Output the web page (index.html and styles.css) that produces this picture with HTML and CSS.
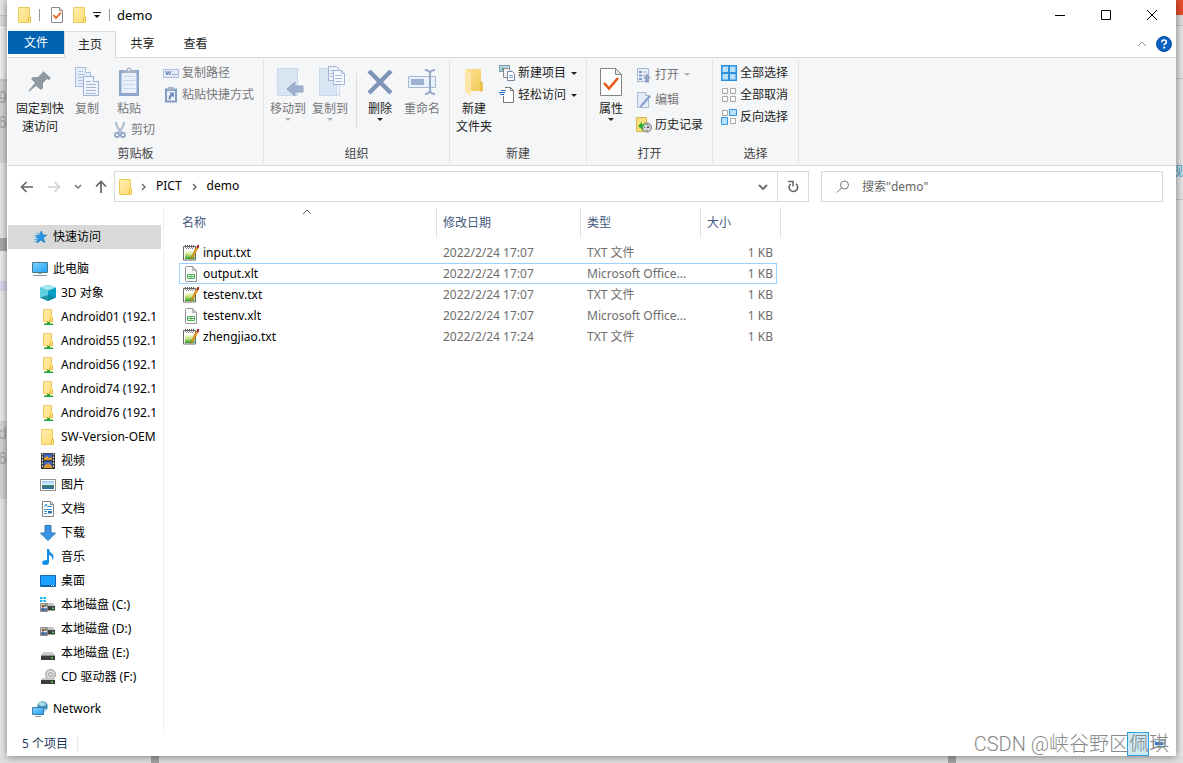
FILE: index.html
```html
<!DOCTYPE html>
<html lang="zh-CN">
<head>
<meta charset="utf-8">
<title>demo</title>
<link rel="stylesheet" href="styles.css">
</head>
<body>
<svg class="sprite" aria-hidden="true">
  <defs>
    <linearGradient id="gFolder" x1="0" y1="0" x2="1" y2="1"><stop offset="0" stop-color="#ffefb0"/><stop offset="1" stop-color="#ffd970"/></linearGradient>
    <linearGradient id="gBig" x1="0" y1="0" x2="1" y2="1"><stop offset="0" stop-color="#fbe29a"/><stop offset="1" stop-color="#f0c850"/></linearGradient>
    <linearGradient id="gScreen" x1="0" y1="0" x2="1" y2="1"><stop offset="0" stop-color="#7fd4ff"/><stop offset="1" stop-color="#22a0f5"/></linearGradient>
    <linearGradient id="gPad" x1="0" y1="0" x2="0" y2="1"><stop offset="0" stop-color="#f4fbd8"/><stop offset=".4" stop-color="#cfe98c"/><stop offset="1" stop-color="#2f9a1f"/></linearGradient>
    <linearGradient id="gPic" x1="0" y1="0" x2="0" y2="1"><stop offset="0" stop-color="#8fc6f2"/><stop offset=".45" stop-color="#dff1fb"/><stop offset=".55" stop-color="#3f7f6a"/><stop offset="1" stop-color="#2b68b0"/></linearGradient>
  </defs>
  <symbol id="folder" viewBox="0 0 16 16"><path d="M1.500.5h11v11h1v4h-12z" fill="url(#gFolder)" stroke="#eccb5c"/><path d="M11.500 15.500v-4l1-1.500h1v5.500" fill="#ffe58e" stroke="#e6c044"/></symbol>
  <symbol id="netfolder" viewBox="0 0 16 16"><path d="M3.500.5h8v9h1v3h-9z" fill="url(#gFolder)" stroke="#eccb5c"/><path d="M10.500 12.500v-3l1-1h1v4z" fill="#ffe58e" stroke="#e6c044"/><path d="M7 13h3v1.500h3V16H4v-1.500h3z" fill="#27a72b"/></symbol>
  <symbol id="checkdoc" viewBox="0 0 12 16"><path d="M.5.5h8l3 3v12H.5z" fill="#fff" stroke="#8b8b8b"/><path d="M8.500.5v3h3" fill="#e4e4e4" stroke="#8b8b8b"/><path d="M2.500 8l2.500 3 5-5.500" fill="none" stroke="#e8591c" stroke-width="1.800"/></symbol>
  <symbol id="pin" viewBox="0 0 32 32"><path d="M19 5l8 7-2 2-2-1-4 4v5l-2 2-5-4-6 5-1.500.5L5 24l6-7-4-4 2-2h5l4-4z" fill="#8e999f"/></symbol>
  <symbol id="copy" viewBox="0 0 32 32"><path d="M4.500 1.500h10l5 5v14h-15z" fill="#e5edf8" stroke="#a8bcd9"/><path d="M14.500 1.500v5h5" fill="#fff" stroke="#a8bcd9"/><path d="M7 5.500h5M7 8.500h7M7 11.500h7M7 14.500h7M7 17.500h7" stroke="#b0c2dd"/><path d="M12.500 10.500h10l5 5v14h-15z" fill="#f1f5fb" stroke="#9cb2d3"/><path d="M22.500 10.500v5h5" fill="#fff" stroke="#9cb2d3"/><path d="M15 15.500h5M15 18.500h10M15 21.500h10M15 24.500h10M15 27.500h10" stroke="#a4b8d6"/></symbol>
  <symbol id="paste" viewBox="0 0 32 32"><path d="M6 4h20v26H6z" fill="#8ea6cb"/><path d="M8.500 7h15v20h-15z" fill="#e9f0fa"/><path d="M10 10.500h12M10 14.500h12M10 18.500h12M10 22.500h12" stroke="#cbd8ea"/><path d="M10 7V4h3.500a2.500 2.500 0 0 1 5 0H22v3z" fill="#a9b4c4"/><circle cx="16" cy="4" r="1" fill="#fff"/></symbol>
  <symbol id="scissors" viewBox="0 0 12 16"><path d="M2 0c0 4 2 7 6 11M10 0c0 4-2 7-6 11" fill="none" stroke="#a9bbd2" stroke-width="2"/><circle cx="3" cy="13" r="2.100" fill="none" stroke="#8aa1c6" stroke-width="1.600"/><circle cx="9" cy="13" r="2.100" fill="none" stroke="#8aa1c6" stroke-width="1.600"/></symbol>
  <symbol id="path" viewBox="0 0 16 16"><path d="M.5 4.500h15v8H.5z" fill="#e2ebf7" stroke="#aebfdb"/><path d="M2.500 6l1.500 4 1.500-4M5 6l1.500 4L8 6" fill="none" stroke="#6583b5"/><path d="M9 9.500h1.500M11.500 9.500h1M13.500 9.500h1" stroke="#6583b5"/></symbol>
  <symbol id="shortcut" viewBox="0 0 16 16"><path d="M2 1.500h12v14H2z" fill="#839cc4"/><path d="M4 4h8v9.500H4z" fill="#eef3fa"/><path d="M5 0h6v3H5z" fill="#a8b6ca"/><path d="M6 5.500h5v5l-1.500-1.500q-2 1-2 3.500h-2q0-4 2.300-5.200z" fill="#6f8dbd"/></symbol>
  <symbol id="moveto" viewBox="0 0 32 32"><path d="M5.500 2.500h20v27h-20z" fill="#dae5f4" stroke="#cad8ec"/><path d="M21 16v12l3 2V18z" fill="#edf3fa"/><path d="M15 23l8-7v4h8v6h-8v4z" fill="#a0b1cf" stroke="#8fa4c6"/></symbol>
  <symbol id="copyto" viewBox="0 0 32 32"><path d="M5.500 2.500h20v27h-20z" fill="#dae5f4" stroke="#cad8ec"/><path d="M22.500 29v-9l3-3v12" fill="#edf3fa" stroke="#cad8ec"/><path d="M14.500.5h8l3 3v11h-11z" fill="#eef3fa" stroke="#9fb4d4"/><path d="M19.500 4.500h8l3 3v11h-11z" fill="#f6f9fd" stroke="#9fb4d4"/><path d="M27.500 4.500v3h3M21 9.500h7M21 12.500h7M21 15.500h7M16 4.500h3M16 7.500h3M16 10.500h3" fill="none" stroke="#a5b8d6"/></symbol>
  <symbol id="delete" viewBox="0 0 32 32"><path d="M5 5l22 22M27 5L5 27" stroke="#7f94b8" stroke-width="4.500"/></symbol>
  <symbol id="rename" viewBox="0 0 32 32"><path d="M2.500 10.500h27v11h-27z" fill="#eaf1fa" stroke="#a4b8d7"/><path d="M5 13h13v6H5z" fill="#9cb0d0"/><path d="M19 4q4 0 5 3 1-3 5-3M19 28q4 0 5-3 1 3 5 3M24 6v20" fill="none" stroke="#95a9c8" stroke-width="2"/></symbol>
  <symbol id="bigfolder" viewBox="0 0 32 32"><path d="M7 3h16v12l2 2v8H12V9L7 3z" fill="url(#gBig)"/><path d="M7 3l6 4v23l-6-4z" fill="#fbe6a8"/><path d="M22 15l2.500 2v8.500H22z" fill="#e9bf4d"/></symbol>
  <symbol id="newitem" viewBox="0 0 16 16"><path d="M.5.5h10v6H.5z" fill="#b9ddec" stroke="#7a9aa8"/><path d="M2 5l2-3 3 4" fill="#459a8c"/><path d="M4.500 3.500h5l2 2v7h-7z" fill="#f4f4f4" stroke="#8a8a8a"/><path d="M8.500 6.500h5l2 2v7h-7z" fill="#fff" stroke="#788aa0"/><path d="M10 10.500h4M10 12.500h4" stroke="#7aa5d5"/></symbol>
  <symbol id="easy" viewBox="0 0 16 16"><path d="M4.500.5h7l3 3v12h-10z" fill="#fff"/><path d="M6 .5h5.500l3 3v12h-10V9" fill="none" stroke="#777"/><path d="M11.500.5v3h3" fill="none" stroke="#777"/><path d="M2 3.500h5M0 5.500h6M1 7.500h4" stroke="#2871b8"/></symbol>
  <symbol id="props" viewBox="0 0 32 32"><path d="M5.500 2.500h15l6 6v21h-21z" fill="#fff" stroke="#858585"/><path d="M20.500 2.500v6h6z" fill="#e6e6e6" stroke="#858585"/><path d="M9 17l5 5.500L23 12" fill="none" stroke="#ea5b19" stroke-width="2.600"/></symbol>
  <symbol id="open" viewBox="0 0 16 16"><path d="M1.500 1.500h11v13h-11z" fill="#eaf0f8" stroke="#a5b8d4"/><path d="M3 4h3v2H3zM3 7.500h3v2H3zM3 11h3v2H3z" fill="#7f98c1"/><path d="M7 5h4M7 8.500h2" stroke="#a5b8d4"/><path d="M9 15.500v-4H7l4-5 4 5h-2v4z" fill="#8fa3c5"/></symbol>
  <symbol id="edit" viewBox="0 0 16 16"><path d="M1.500.5h8l3 3v12h-11z" fill="#e3ecf8" stroke="#a5b8d4"/><path d="M9.500.5v3h3" fill="#fff" stroke="#a5b8d4"/><path d="M13.500 3.500l-8 9-1.500 2.500 2.500-1.500 8-9z" fill="#8fa9cf" stroke="#8199c0"/></symbol>
  <symbol id="history" viewBox="0 0 16 16"><path d="M.5.5h10v14H.5z" fill="#f9df7c" stroke="#d9b54c"/><circle cx="11" cy="10.500" r="4.500" fill="#d8d8d8" stroke="#777"/><path d="M11 10.500l2-2M11 10.500h2.500M11 7v1M11 13v1M8 10.500h1" fill="none" stroke="#555"/><path d="M2 9l4-4v2.500q3-.5 4-2.500-1 3-3 4.500-1 2 0 4.500-2-.5-1.500-2z" fill="#2fae35"/></symbol>
  <symbol id="selall" viewBox="0 0 16 16"><path d="M0 0h16v16H0z" fill="#2b8fe0"/><path d="M1.500 1.500H7V7H1.500zM9 1.500h5.500V7H9zM1.500 9H7v5.500H1.500zM9 9h5.500v5.500H9z" fill="#b8e0fb"/></symbol>
  <symbol id="selnone" viewBox="0 0 16 16"><path d="M1.500 1.500h5v5h-5zM9.500 1.500h5v5h-5zM1.500 9.500h5v5h-5zM9.500 9.500h5v5h-5z" fill="#fff" stroke="#a6a6a6"/></symbol>
  <symbol id="selinv" viewBox="0 0 16 16"><path d="M1.500 1.500h5v5h-5zM9.500 9.500h5v5h-5z" fill="#fff" stroke="#a6a6a6"/><path d="M8.500.5h7v6h-7zM.5 8.500h6v7h-6z" fill="#b8e0fb" stroke="#3596e2"/></symbol>
  <symbol id="star" viewBox="0 0 16 16"><path d="M9.500 2l1 4 4 .2-3.300 2.500 1.600 4.800-4-2.400L5 14l1-4.500-2-2.700 3.500-.6z" fill="#2697ea" stroke="#1777c2" stroke-width=".8"/><path d="M4 4.500h3.500M2 6.500h3M3 8.500h2.500M2 10.500h3M2 12.500h3" stroke="#5fb4f0"/></symbol>
  <symbol id="pc" viewBox="0 0 16 16"><path d="M.5 1.500h15v10H.5z" fill="url(#gScreen)" stroke="#49758f"/><path d="M6 12h4v1H6z" fill="#aaa"/><path d="M1 14.500h14" stroke="#7d95a5"/></symbol>
  <symbol id="cube" viewBox="0 0 16 16"><path d="M8 0l8 2.500v10L8 16 0 12.500v-10z" fill="#0d9fc6"/><path d="M8 0l8 2.500L8 5.500 0 2.500z" fill="#a5e8ee"/><path d="M0 2.500l8 3V16l-8-3.500z" fill="#62d0e0"/><path d="M0 12.500L8 10l8 2.500L8 16z" fill="#087f93" opacity=".75"/></symbol>
  <symbol id="video" viewBox="0 0 16 16"><path d="M1 0h14v16H1z" fill="#3b3b3b"/><path d="M4 1h8v6H4zM4 8.500h8V15H4z" fill="#3d64c9"/><path d="M4 5l3-2 2 2 3-1v3H4zM4 13l4-3 4 3v2H4z" fill="#d79b2e"/><path d="M2.500.5v15M13.500.5v15" stroke="#eee" stroke-dasharray="1.500 1.500"/></symbol>
  <symbol id="picture" viewBox="0 0 16 16"><path d="M.5 2.500h15v11H.5z" fill="#fff" stroke="#8d8d8d"/><path d="M2 4h12v8H2z" fill="url(#gPic)"/></symbol>
  <symbol id="doc" viewBox="0 0 16 16"><path d="M2.500.5h8l3 3v12h-11z" fill="#fff" stroke="#838383"/><path d="M10.500.5v3h3" fill="none" stroke="#838383"/><path d="M4.500 6l1.500-3 1.500 3M8 5.500h4M4 8.500h8M4 10.500h3M4 12.500h3" fill="none" stroke="#3d92cf"/><path d="M8 10h4v2.500H8z" fill="#2d75a8"/></symbol>
  <symbol id="down" viewBox="0 0 16 16"><path d="M5 .5h6V8h4.500L8 15.500.5 8H5z" fill="#3a93e2" stroke="#2a76c0"/></symbol>
  <symbol id="music" viewBox="0 0 16 16"><path d="M7 0h2q.5 3 3 4.500 3 3 .5 7Q13 7 9 6v7q0 3-3.500 3Q2 16 2 13.500 2.300 11 7 11z" fill="#0f8de8"/></symbol>
  <symbol id="desktop" viewBox="0 0 16 16"><path d="M.5 2.500h15v11H.5z" fill="#1a9fff" stroke="#1269a9"/><path d="M1 12.500h14" stroke="#0d5f9d"/><path d="M11 12.500h1M13 12.500h1" stroke="#fff"/></symbol>
  <symbol id="disk" viewBox="0 0 16 16"><path d="M3 7h10l2 3.500H1z" fill="#cdcdcd"/><path d="M1 10.500h14V15H1z" fill="#3c3c3c"/><path d="M11 12h2v1.500h-2z" fill="#39d84a"/></symbol>
  <symbol id="shared" viewBox="0 0 16 16"><path d="M7 6h6l2 3H7z" fill="#c2c2c2"/><path d="M7 9h8v4.500H7z" fill="#414141"/><path d="M12 10.500h2V12h-2z" fill="#39d84a"/><path d="M.5 6.500h7v8h-7z" fill="#ddd" stroke="#8c8c8c"/><circle cx="3" cy="9" r="1.300" fill="#8a4c26"/><circle cx="5.500" cy="8.500" r="1.200" fill="#5c6b3a"/><path d="M1 14q0-3.500 2-3.500 2 0 2 2 0-2 2-1.500V14z" fill="#496c9c"/></symbol>
  <symbol id="sysdisk" viewBox="0 0 16 16"><use href="#shared"/><path d="M0 0h2.500v2H0zM3.500 0H6v2H3.500zM0 3h2.500v2H0zM3.500 3H6v2H3.500z" fill="#13b6f2"/></symbol>
  <symbol id="cd" viewBox="0 0 16 16"><circle cx="10.500" cy="5.500" r="5" fill="#d8d8d8" stroke="#999"/><circle cx="10.500" cy="5.500" r="1.700" fill="#fff" stroke="#888"/><path d="M2 9h11l2 2H1z" fill="#c7c7c7"/><path d="M1 11h14v4H1z" fill="#3c3c3c"/><path d="M11 12.500h2V14h-2z" fill="#39d84a"/></symbol>
  <symbol id="network" viewBox="0 0 16 16"><circle cx="10.500" cy="5.500" r="5.300" fill="#4793bd"/><path d="M6 3q4-4 8 0-2 3-5 2zM11 8h4l-2 2.500z" fill="#a9dbe3"/><path d="M.5 6.500h11v7H.5z" fill="url(#gScreen)" stroke="#3b7fa9"/><path d="M3 15.500h6" stroke="#8c9ea8"/></symbol>
  <symbol id="txt" viewBox="0 0 16 16"><path d="M.5 1.500h12v13.500H.5z" fill="#fff" stroke="#666"/><path d="M2 6h9.500v8H2z" fill="url(#gPad)"/><path d="M2 .500h9" stroke="#555" stroke-dasharray="1 1"/><path d="M2 2.500h9M3 3.500h7" stroke="#888" stroke-dasharray="1 1"/><path d="M13 2.500L8.500 12 7.500 14.500 10 12.500 15 3z" fill="#f5a623" stroke="#a86b0f" stroke-width=".6"/><path d="M13.500 2l1-2H16v2l-1 1.500z" fill="#a3151b"/></symbol>
  <symbol id="xlt" viewBox="0 0 16 16"><path d="M3.500.5h6l4 4v11h-10q-1 0-1-1v-13q0-1 1-1z" fill="#fafafa" stroke="#929292"/><path d="M9.500.5v4h4z" fill="#ccc" stroke="#929292" stroke-width=".6"/><path d="M4.500 8.500h7v4h-7zM4.500 10.500h7M8 8.500v4" fill="#fff" stroke="#4fb153"/></symbol>
</svg>

<div class="screen">
  <div class="edge edge-left" aria-hidden="true">
    <span class="edge-toolbar"></span>
    <span class="edge-code edge-code-first"><i>9</i><i>6</i></span>
    <span class="edge-plain"></span>
    <span class="edge-dark"></span>
    <span class="edge-pale"></span>
    <span class="edge-mark"></span>
    <span class="edge-page"></span>
    <span class="edge-code edge-code-second"><i>d</i><i>6</i></span>
  </div>

  <main class="window">
    <header class="titlebar">
      <svg class="i16"><use href="#folder"/></svg>
      <span class="tick"></span>
      <button class="quick" aria-label="属性"><svg class="doc-icon"><use href="#checkdoc"/></svg></button>
      <button class="quick" aria-label="新建文件夹"><svg class="i16"><use href="#folder"/></svg></button>
      <button class="quick-more" aria-label="自定义快速访问工具栏"><svg width="8" height="8" viewBox="0 0 8 8"><path d="M0 1.500h8" stroke="#111"/><path d="M1 4h6L4 7z" fill="#111"/></svg></button>
      <span class="tick"></span>
      <h1 class="title">demo</h1>
      <div class="controls">
        <button aria-label="最小化"><svg width="10" height="10"><path d="M0 5.500h10" stroke="#000"/></svg></button>
        <button aria-label="最大化"><svg width="10" height="10"><path d="M.5.5h9v9h-9z" fill="none" stroke="#000"/></svg></button>
        <button aria-label="关闭"><svg width="10" height="10"><path d="M0 0l10 10M10 0L0 10" stroke="#000"/></svg></button>
      </div>
    </header>

    <nav class="tabs">
      <button class="tab tab-file">文件</button>
      <button class="tab tab-active">主页</button>
      <button class="tab">共享</button>
      <button class="tab">查看</button>
      <div class="tab-tools">
        <button aria-label="最小化功能区"><svg width="10" height="6"><path d="M1 5l4-4 4 4" fill="none" stroke="#999"/></svg></button>
        <button aria-label="帮助"><svg width="16" height="16"><circle cx="8" cy="8" r="7.500" fill="#0a63c2" stroke="#084b94"/><path d="M5.800 6.200q0-2.200 2.300-2.200 2.200 0 2.200 1.900 0 1.100-1.200 1.800-.9.600-.9 1.600" fill="none" stroke="#fff" stroke-width="1.600"/><circle cx="8.200" cy="11.600" r="1.100" fill="#fff"/></svg></button>
      </div>
    </nav>

    <section class="ribbon">
      <div class="group">
        <div class="tools tools-clip">
          <button class="big big-wide"><svg class="i32"><use href="#pin"/></svg><span>固定到快<br>速访问</span></button>
          <button class="big off"><svg class="i32"><use href="#copy"/></svg><span>复制</span></button>
          <div class="stack">
            <button class="big off"><svg class="i32"><use href="#paste"/></svg><span>粘贴</span></button>
            <button class="small off"><svg class="scissors"><use href="#scissors"/></svg>剪切</button>
          </div>
          <div class="list">
            <button class="small off"><svg class="i16"><use href="#path"/></svg>复制路径</button>
            <button class="small off"><svg class="i16"><use href="#shortcut"/></svg>粘贴快捷方式</button>
          </div>
        </div>
        <div class="caption">剪贴板</div>
      </div>
      <div class="group">
        <div class="tools tools-organize">
          <button class="big off"><svg class="i32"><use href="#moveto"/></svg><span>移动到</span><b class="caret"></b></button>
          <button class="big off"><svg class="i32"><use href="#copyto"/></svg><span>复制到</span><b class="caret"></b></button>
          <span class="rule"></span>
          <button class="big"><svg class="i32"><use href="#delete"/></svg><span>删除</span><b class="caret"></b></button>
          <button class="big off"><svg class="i32"><use href="#rename"/></svg><span>重命名</span></button>
        </div>
        <div class="caption">组织</div>
      </div>
      <div class="group">
        <div class="tools tools-new">
          <button class="big"><svg class="i32"><use href="#bigfolder"/></svg><span>新建<br>文件夹</span></button>
          <div class="list">
            <button class="small"><svg class="i16"><use href="#newitem"/></svg>新建项目<b class="caret"></b></button>
            <button class="small"><svg class="i16"><use href="#easy"/></svg>轻松访问<b class="caret"></b></button>
          </div>
        </div>
        <div class="caption">新建</div>
      </div>
      <div class="group">
        <div class="tools tools-open">
          <button class="big"><svg class="i32"><use href="#props"/></svg><span>属性</span><b class="caret"></b></button>
          <div class="list list-loose">
            <button class="small off"><svg class="i16"><use href="#open"/></svg>打开<b class="caret"></b></button>
            <button class="small off"><svg class="i16"><use href="#edit"/></svg>编辑</button>
            <button class="small"><svg class="i16"><use href="#history"/></svg>历史记录</button>
          </div>
        </div>
        <div class="caption">打开</div>
      </div>
      <div class="group">
        <div class="tools tools-select">
          <div class="list">
            <button class="small"><svg class="i16"><use href="#selall"/></svg>全部选择</button>
            <button class="small"><svg class="i16"><use href="#selnone"/></svg>全部取消</button>
            <button class="small"><svg class="i16"><use href="#selinv"/></svg>反向选择</button>
          </div>
        </div>
        <div class="caption">选择</div>
      </div>
    </section>

    <section class="location">
      <div class="history">
        <button aria-label="后退"><svg width="14" height="12"><path d="M13 6H2M6.500 1L1.500 6l5 5" fill="none" stroke="#666" stroke-width="1.700"/></svg></button>
        <button aria-label="前进"><svg width="14" height="12"><path d="M1 6h11M7.500 1l5 5-5 5" fill="none" stroke="#d2d2d2" stroke-width="1.700"/></svg></button>
        <button aria-label="最近浏览的位置"><svg width="8" height="6"><path d="M1 1l3 3 3-3" fill="none" stroke="#777" stroke-width="1.500"/></svg></button>
        <button aria-label="上移"><svg width="12" height="14"><path d="M6 13V2M1 6.500l5-5 5 5" fill="none" stroke="#666" stroke-width="1.700"/></svg></button>
      </div>
      <div class="address">
        <svg class="i16"><use href="#folder"/></svg>
        <svg class="crumb-arrow" width="6" height="8"><path d="M1 1l3 3-3 3" fill="none" stroke="#666" stroke-width="1.400"/></svg>
        <a class="crumb" href="#">PICT</a>
        <svg class="crumb-arrow" width="6" height="8"><path d="M1 1l3 3-3 3" fill="none" stroke="#666" stroke-width="1.400"/></svg>
        <a class="crumb" href="#">demo</a>
        <button class="drop" aria-label="以前的位置"><svg width="10" height="8"><path d="M1 2l4 4 4-4" fill="none" stroke="#666" stroke-width="1.800"/></svg></button>
        <button class="refresh" aria-label="刷新"><svg width="12" height="14"><path d="M9 3.800A4.300 4.300 0 1 1 3.500 4" fill="none" stroke="#666" stroke-width="1.600"/><path d="M1 1.500h5v5" fill="none" stroke="#666" stroke-width="1.500"/></svg></button>
      </div>
      <label class="search">
        <svg width="14" height="14"><circle cx="8.500" cy="5" r="4" fill="none" stroke="#777"/><path d="M5.500 8L1 12.500" stroke="#777"/></svg>
        <input type="text" aria-label="搜索" placeholder='搜索"demo"'>
      </label>
    </section>

    <div class="content">
      <nav class="tree">
        <a href="#" class="node root current"><svg class="i16"><use href="#star"/></svg>快速访问</a>
        <div class="branch">
          <a href="#" class="node root"><svg class="i16"><use href="#pc"/></svg>此电脑</a>
          <a href="#" class="node"><svg class="i16"><use href="#cube"/></svg>3D 对象</a>
          <a href="#" class="node"><svg class="i16"><use href="#netfolder"/></svg>Android01 (192.1</a>
          <a href="#" class="node"><svg class="i16"><use href="#netfolder"/></svg>Android55 (192.1</a>
          <a href="#" class="node"><svg class="i16"><use href="#netfolder"/></svg>Android56 (192.1</a>
          <a href="#" class="node"><svg class="i16"><use href="#netfolder"/></svg>Android74 (192.1</a>
          <a href="#" class="node"><svg class="i16"><use href="#netfolder"/></svg>Android76 (192.1</a>
          <a href="#" class="node"><svg class="i16"><use href="#folder"/></svg>SW-Version-OEM</a>
          <a href="#" class="node"><svg class="i16"><use href="#video"/></svg>视频</a>
          <a href="#" class="node"><svg class="i16"><use href="#picture"/></svg>图片</a>
          <a href="#" class="node"><svg class="i16"><use href="#doc"/></svg>文档</a>
          <a href="#" class="node"><svg class="i16"><use href="#down"/></svg>下载</a>
          <a href="#" class="node"><svg class="i16"><use href="#music"/></svg>音乐</a>
          <a href="#" class="node"><svg class="i16"><use href="#desktop"/></svg>桌面</a>
          <a href="#" class="node"><svg class="i16"><use href="#sysdisk"/></svg>本地磁盘 (C:)</a>
          <a href="#" class="node"><svg class="i16"><use href="#shared"/></svg>本地磁盘 (D:)</a>
          <a href="#" class="node"><svg class="i16"><use href="#disk"/></svg>本地磁盘 (E:)</a>
          <a href="#" class="node"><svg class="i16"><use href="#cd"/></svg>CD 驱动器 (F:)</a>
        </div>
        <a href="#" class="node root"><svg class="i16"><use href="#network"/></svg>Network</a>
      </nav>

      <div class="files">
        <table>
          <colgroup><col class="c-name"><col class="c-date"><col class="c-type"><col class="c-size"><col class="c-end"></colgroup>
          <thead>
            <tr><th>名称<svg class="sort" width="10" height="6"><path d="M1 5l4-4 4 4" fill="none" stroke="#666"/></svg></th><th>修改日期</th><th>类型</th><th>大小</th><th></th></tr>
          </thead>
          <tbody>
            <tr><td><span class="file"><svg class="i16"><use href="#txt"/></svg>input.txt</span></td><td>2022/2/24 17:07</td><td>TXT 文件</td><td>1 KB</td></tr>
            <tr class="focused"><td><span class="file"><svg class="i16"><use href="#xlt"/></svg>output.xlt</span></td><td>2022/2/24 17:07</td><td>Microsoft Office...</td><td>1 KB</td></tr>
            <tr><td><span class="file"><svg class="i16"><use href="#txt"/></svg>testenv.txt</span></td><td>2022/2/24 17:07</td><td>TXT 文件</td><td>1 KB</td></tr>
            <tr><td><span class="file"><svg class="i16"><use href="#xlt"/></svg>testenv.xlt</span></td><td>2022/2/24 17:07</td><td>Microsoft Office...</td><td>1 KB</td></tr>
            <tr><td><span class="file"><svg class="i16"><use href="#txt"/></svg>zhengjiao.txt</span></td><td>2022/2/24 17:24</td><td>TXT 文件</td><td>1 KB</td></tr>
          </tbody>
        </table>
      </div>
    </div>

    <footer class="status">
      <span class="count">5 个项目</span>
      <button class="view view-on" aria-label="详细信息"></button>
      <button class="view" aria-label="大图标"><svg width="16" height="10"><path d="M2.500.5h11v8h-11z" fill="#d9e8f8" stroke="#8aa"/><path d="M4 3h8v3H4z" fill="#3c74c8"/></svg></button>
      <span class="watermark">CSDN @峡谷野区佩琪</span>
    </footer>
  </main>

  <div class="edge edge-right" aria-hidden="true">
    <span class="edge-red"></span>
    <span class="edge-row edge-row-a"></span>
    <span class="edge-row edge-row-b"></span>
    <span class="edge-row edge-row-c"><i>规</i></span>
  </div>
  <div class="edge-bottom" aria-hidden="true"><span></span><span></span></div>
</div>
</body>
</html>
```
FILE: styles.css
```css
* { box-sizing: border-box; }

body {
  margin: 0;
  font: 12px/18px "Noto Sans", "Noto Sans CJK SC", sans-serif;
  color: #000;
}

button {
  margin: 0;
  padding: 0;
  border: 0;
  background: none;
  color: inherit;
  font: inherit;
}

a { color: inherit; text-decoration: none; }
svg { display: block; flex: none; }
.sprite { position: absolute; width: 0; height: 0; }
.i16 { width: 16px; height: 16px; }
.i32 { width: 32px; height: 32px; }

/* Desktop behind the window */
.screen {
  display: grid;
  grid-template: minmax(0, 1fr) 7px / 7px minmax(0, 1fr) 7px;
  min-height: 100vh;
  background: #e4e4e4;
}
.edge { display: flex; flex-direction: column; overflow: hidden; background: #e9e9e9; }
.edge span { flex: none; }
.edge i { display: block; font: 16px/25px "Liberation Sans", sans-serif; color: #aaa; }
.edge-toolbar { height: 81px; background: linear-gradient(#e8e8e8 15px, #c8c8c8 15px, #c8c8c8 16px, #dedede 16px, #dedede 25px, #ccc 25px, #ccc 26px, #f0f0f0 26px); border-bottom: 2px solid #c8c8c8; }
.edge-code { display: flex; flex-direction: column; align-items: flex-end; background: #d5d5d5; }
.edge-code-first { height: 82px; padding-top: 4px; }
.edge-plain { height: 75px; background: #e8e8e8; }
.edge-dark { height: 13px; background: #a9a9a9; }
.edge-pale { height: 30px; background: #efefef; }
.edge-mark { height: 10px; background: #d9d9ee; }
.edge-page { height: 130px; background: #ececec; }
.edge-code-second { height: 78px; }
.edge-red { height: 15px; background: #ea4f2d; }
.edge-row { border-bottom: 1px solid #c8c8c8; background: #e6e6e6; }
.edge-row-a { height: 11px; background: #dedede; }
.edge-row-b { height: 53px; }
.edge-row-c { display: flex; justify-content: flex-end; height: 121px; padding-top: 79px; }
.edge-row-c i { font: 12px/25px "Noto Sans CJK SC", sans-serif; color: #3b9bcb; }
.edge-bottom { grid-column: 1 / 4; display: grid; grid-template-columns: 7fr 35fr 10fr; background: #dedede; }
.edge-bottom span { border-right: 8px solid #a2a2a2; }

.window {
  position: relative;
  display: flex;
  flex-direction: column;
  padding-left: 1px;
  background: #fff;
  box-shadow: 0 0 8px rgba(0, 0, 0, .5);
}

/* Title bar */
.titlebar { display: flex; align-items: center; height: 31px; padding: 0 1px 1px 9px; }
.tick { width: 1px; height: 12px; margin: 0 11px 0 6px; background: #999; }
.quick { width: 16px; margin-right: 5px; }
.quick .doc-icon { width: 12px; height: 16px; }
.quick-more + .tick { margin-left: 8px; margin-right: 7px; }
.title { margin: 0; font-size: 13px; font-weight: 400; }
.controls { display: flex; align-self: stretch; margin-left: auto; }
.controls button { display: grid; place-items: center; width: 46px; }

/* Tabs */
.tabs { display: flex; height: 27px; border-bottom: 1px solid #dadbdc; }
.tab { width: 53px; color: #222; }
.tab-file { width: 56px; height: 23px; background: #0063b1; color: #fff; }
.tab-active { width: 52px; height: 27px; border: 1px solid #dadbdc; border-bottom: 0; background: #f5f6f7; }
.tab-tools { display: flex; align-items: center; gap: 9px; margin-left: auto; padding-right: 4px; }

/* Ribbon */
.ribbon { display: flex; height: 108px; border-bottom: 1px solid #dadbdc; background: #f5f6f7; }
.group { display: flex; flex-direction: column; margin: 2px 0; border-right: 1px solid #e2e3e4; color: #222; }
.tools { display: flex; flex: 1; padding: 2px 3px 0; }
.tools-clip { padding: 2px 9px 0 8px; }
.tools-organize { padding-right: 6px; }
.tools-new { padding-right: 9px; }
.tools-open { padding-right: 9px; }
.tools-select { padding: 2px 10px 0 4px; }
.caption { height: 18px; line-height: 18px; text-align: center; color: #444; }
.big { display: flex; flex-direction: column; align-items: center; width: 42px; padding-top: 4px; align-self: flex-start; white-space: nowrap; }
.big span { padding-top: 2px; }
.big-wide { width: 48px; margin-right: 2px; }
.stack { display: flex; flex-direction: column; }
.stack .small { height: 20px; gap: 5px; margin: 2px 0 0 6px; }
.scissors { width: 12px; height: 16px; }
.list { display: flex; flex-direction: column; margin-left: 4px; }
.tools-clip .list { margin-left: 8px; }
.small { display: flex; align-items: center; gap: 3px; height: 22px; white-space: nowrap; }
.list-loose .small { height: 25px; }
.off { color: #777; }
.caret { width: 0; border: 3px solid transparent; border-top-color: #222; border-bottom: 0; }
.off .caret { border-top-color: #b0b0b0; }
.small .caret { margin-left: 2px; }
.rule { width: 1px; height: 55px; margin: 11px 2px 0 5px; background: #dcdddf; }

/* Location bar */
.location { display: flex; padding: 5px 13px 6px 0; height: 42px; }
.history { display: flex; align-items: center; width: 106px; padding: 0 7px 0 12px; justify-content: space-between; }
.address { display: flex; flex: 1; align-items: center; margin-right: 12px; padding-left: 3px; border: 1px solid #d9d9d9; }
.crumb-arrow { margin: 0 9px 0 7px; }
.crumb { padding-bottom: 2px; margin-right: 3px; }
.drop { display: grid; place-items: center; width: 28px; height: 100%; margin-left: auto; }
.refresh { display: grid; place-items: center; width: 31px; height: 100%; border-left: 1px solid #d9d9d9; }
.search { display: flex; align-items: center; width: 30%; max-width: 342px; gap: 12px; padding: 0 14px; border: 1px solid #d9d9d9; }
.search input { flex: 1; min-width: 0; padding: 0; border: 0; outline: 0; background: none; font: inherit; }
.search input::placeholder { color: #666; opacity: 1; }

/* Folder tree and file list */
.content { display: flex; flex: 1; min-height: 0; }
.tree { width: 156px; padding: 17px 2px 0 0; border-right: 1px solid #f0f0f0; }
.node { display: flex; align-items: center; height: 24px; gap: 5px; padding-left: 32px; overflow: hidden; white-space: nowrap; }
.root { padding-left: 24px; }
.current { background: #d9d9d9; }
.branch { margin: 8px 0; }
.files { flex: 1; padding-left: 15px; }
table { border-collapse: separate; border-spacing: 0; table-layout: fixed; width: 602px; }
.c-name { width: 258px; }
.c-date { width: 144px; }
.c-type { width: 120px; }
.c-size { width: 76px; }
.c-end { width: 4px; }
th { position: relative; height: 30px; padding: 0 0 0 6px; border-right: 1px solid #e3e3e3; font-weight: 400; text-align: left; color: #43597c; }
th:first-child { padding-left: 3px; }
th:nth-child(4) { border-right: 0; }
th:last-child { padding: 0; }
.sort { position: absolute; top: 1px; left: 50%; margin-left: -6px; }
thead::after { content: ""; display: block; height: 4px; }
td { height: 21px; padding: 0 0 0 6px; border: solid transparent; border-width: 1px 0; line-height: 18px; color: #6d6d6d; }
td:first-child { padding-left: 3px; border-left-width: 1px; color: #000; }
td:nth-child(4) { padding: 0 3px 0 0; border-right-width: 1px; text-align: right; }
.focused td { border-color: #99d1ff; }
.file { display: flex; align-items: center; gap: 4px; }

/* Status bar */
.status { display: flex; align-items: center; height: 25px; padding-right: 7px; }
.count { padding: 0 9px 0 14px; border-right: 1px solid #e5e5e5; line-height: 14px; margin-right: auto; color: #1e395b; }
.view { display: grid; place-items: center; width: 20px; height: 22px; }
.view-on { width: 22px; height: 24px; border: 1px solid #26a0da; background: #cbe8f6; }
.watermark { position: absolute; right: 7px; bottom: 0; font: 300 20px/24px Roboto, "Noto Sans CJK SC", sans-serif; color: #888; }
```
